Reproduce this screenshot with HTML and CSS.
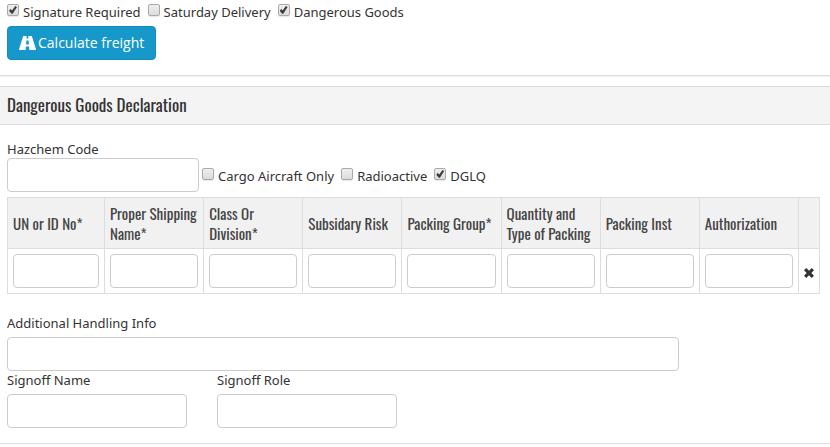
FILE: index.html
```html
<!DOCTYPE html>
<html lang="en">
<head>
  <meta charset="UTF-8" />
  <title>Dangerous Goods Declaration</title>
  <link rel="stylesheet" href="styles.css">
</head>
<body>

  <section class="panel freight">
    <div class="checks">
      <label class="check"><input type="checkbox" checked> Signature Required</label>
      <label class="check"><input type="checkbox"> Saturday Delivery</label>
      <label class="check"><input type="checkbox" checked> Dangerous Goods</label>
    </div>
    <button type="button" class="btn">
      <svg class="icon-road" viewBox="0 0 17 14" aria-hidden="true">
        <path fill-rule="evenodd" d="M4.2 0H7.7L7.5 2.4H9.5L9.3 0H12.8L17 13.2Q17 14 16.4 14H10.4L10.1 10.4H6.9L6.6 14H.6Q0 14 0 13.2ZM7.4 4.4L7.1 8.4H9.9L9.6 4.4Z"/>
      </svg>
      Calculate freight
    </button>
  </section>

  <section class="panel declaration">
    <h2 class="panel-title">Dangerous Goods Declaration</h2>
    <div class="panel-body">
      <div class="hazchem">
        <div class="field field-code">
          <label for="hazchem">Hazchem Code</label>
          <input id="hazchem" class="text" type="text">
        </div>
        <div class="checks">
          <label class="check"><input type="checkbox"> Cargo Aircraft Only</label>
          <label class="check"><input type="checkbox"> Radioactive</label>
          <label class="check"><input type="checkbox" checked> DGLQ</label>
        </div>
      </div>

      <table class="goods">
        <thead>
          <tr>
            <th class="col-un">UN or ID No*</th>
            <th>Proper Shipping Name*</th>
            <th>Class Or Division*</th>
            <th>Subsidary Risk</th>
            <th>Packing Group*</th>
            <th>Quantity and Type of Packing</th>
            <th>Packing Inst</th>
            <th>Authorization</th>
            <th class="col-remove"></th>
          </tr>
        </thead>
        <tbody>
          <tr>
            <td><input class="text" type="text" aria-label="UN or ID No"></td>
            <td><input class="text" type="text" aria-label="Proper Shipping Name"></td>
            <td><input class="text" type="text" aria-label="Class Or Division"></td>
            <td><input class="text" type="text" aria-label="Subsidary Risk"></td>
            <td><input class="text" type="text" aria-label="Packing Group"></td>
            <td><input class="text" type="text" aria-label="Quantity and Type of Packing"></td>
            <td><input class="text" type="text" aria-label="Packing Inst"></td>
            <td><input class="text" type="text" aria-label="Authorization"></td>
            <td class="col-remove">
              <button type="button" class="remove" aria-label="Remove row">
                <svg viewBox="0 0 10 10" aria-hidden="true">
                  <path d="M2.3 0L5 2.7L7.7 0L10 2.3L7.3 5L10 7.7L7.7 10L5 7.3L2.3 10L0 7.7L2.7 5L0 2.3Z"/>
                </svg>
              </button>
            </td>
          </tr>
        </tbody>
      </table>

      <div class="field field-info">
        <label for="info">Additional Handling Info</label>
        <input id="info" class="text" type="text">
      </div>
      <div class="signoff">
        <div class="field">
          <label for="signoff-name">Signoff Name</label>
          <input id="signoff-name" class="text" type="text">
        </div>
        <div class="field">
          <label for="signoff-role">Signoff Role</label>
          <input id="signoff-role" class="text" type="text">
        </div>
      </div>
    </div>
  </section>

</body>
</html>
```
FILE: styles.css
```css
:root {
  --text: #333;
  --border: #ddd;
  --input-border: #ccc;
  --blue: #1699ca;
  --heading-font: "Oswald", "Roboto", sans-serif;
}

* {
  box-sizing: border-box;
}

body {
  margin: 0;
  background: #fff;
  color: var(--text);
  font-family: "Noto Sans", "Open Sans", sans-serif;
  font-size: 13px;
  line-height: 20px;
}

.panel {
  border-bottom: 1px solid var(--border);
  box-shadow: 0 1px 1px rgba(0, 0, 0, 0.05);
}

.freight {
  padding: 2px 7px 15px;
  margin-bottom: 10px;
}

.checks {
  display: flex;
  gap: 7px;
}

.check {
  display: flex;
  gap: 3px;
}

.check input {
  appearance: none;
  position: relative;
  width: 12px;
  height: 12px;
  margin: 2px 1px 0 0;
  border: 1px solid #aaa;
  border-radius: 2px;
  background: linear-gradient(#eee, #dcdcdc);
  box-shadow: 0 1px 1px rgba(0, 0, 0, 0.1);
}

.check input:checked::before {
  content: "";
  position: absolute;
  inset: 1px 1px 1px 1px;
  background: #3c3c3c;
  clip-path: polygon(0 58%, 20% 38%, 38% 56%, 78% 0, 100% 14%, 46% 96%, 32% 96%);
}

.btn {
  display: flex;
  align-items: center;
  gap: 2px;
  height: 34px;
  margin-top: 4px;
  padding: 0 11px;
  border: 1px solid #148ebb;
  border-radius: 4px;
  background: var(--blue);
  color: #fff;
  font: 14px/20px "Open Sans", sans-serif;
  cursor: pointer;
}

.icon-road {
  width: 17px;
  height: 14px;
  fill: #fff;
}

.panel-title {
  margin: 0;
  padding: 8px 7px 9px;
  border-top: 1px solid var(--border);
  border-bottom: 1px solid var(--border);
  background: #f4f4f4;
  font: 400 17px/20px var(--heading-font);
}

.panel-body {
  padding: 14px 10px 15px 7px;
}

.field label {
  display: block;
}

.text {
  display: block;
  width: 100%;
  height: 34px;
  padding: 6px 12px;
  border: 1px solid var(--input-border);
  border-radius: 4px;
  background: #fff;
  font: inherit;
}

.hazchem {
  display: flex;
  align-items: flex-end;
  gap: 3px;
}

.hazchem .checks {
  padding-bottom: 6px;
}

.field-code {
  width: 192px;
}

.field-code label {
  height: 19px;
}

.goods {
  width: 100%;
  margin: 5px 0 19px;
  border-collapse: collapse;
  table-layout: fixed;
}

.goods th,
.goods td {
  padding: 5px;
  border: 1px solid var(--border);
}

.goods th {
  background: #f1f1f1;
  color: #444;
  font: 400 15px/20px var(--heading-font);
  text-align: left;
}

.goods td {
  height: 45px;
}

.goods .col-un {
  width: 97px;
}

.goods .col-remove {
  width: 21px;
}

.remove {
  display: block;
  width: 10px;
  height: 10px;
  margin-top: 3px;
  padding: 0;
  border: 0;
  background: none;
  cursor: pointer;
}

.remove svg {
  display: block;
  fill: #333;
}

.field-info {
  max-width: 672px;
}

.field-info label {
  padding-bottom: 4px;
}

.signoff {
  display: grid;
  grid-template-columns: 180px 180px;
  gap: 30px;
}

.signoff label {
  height: 23px;
  line-height: 19px;
}
```
